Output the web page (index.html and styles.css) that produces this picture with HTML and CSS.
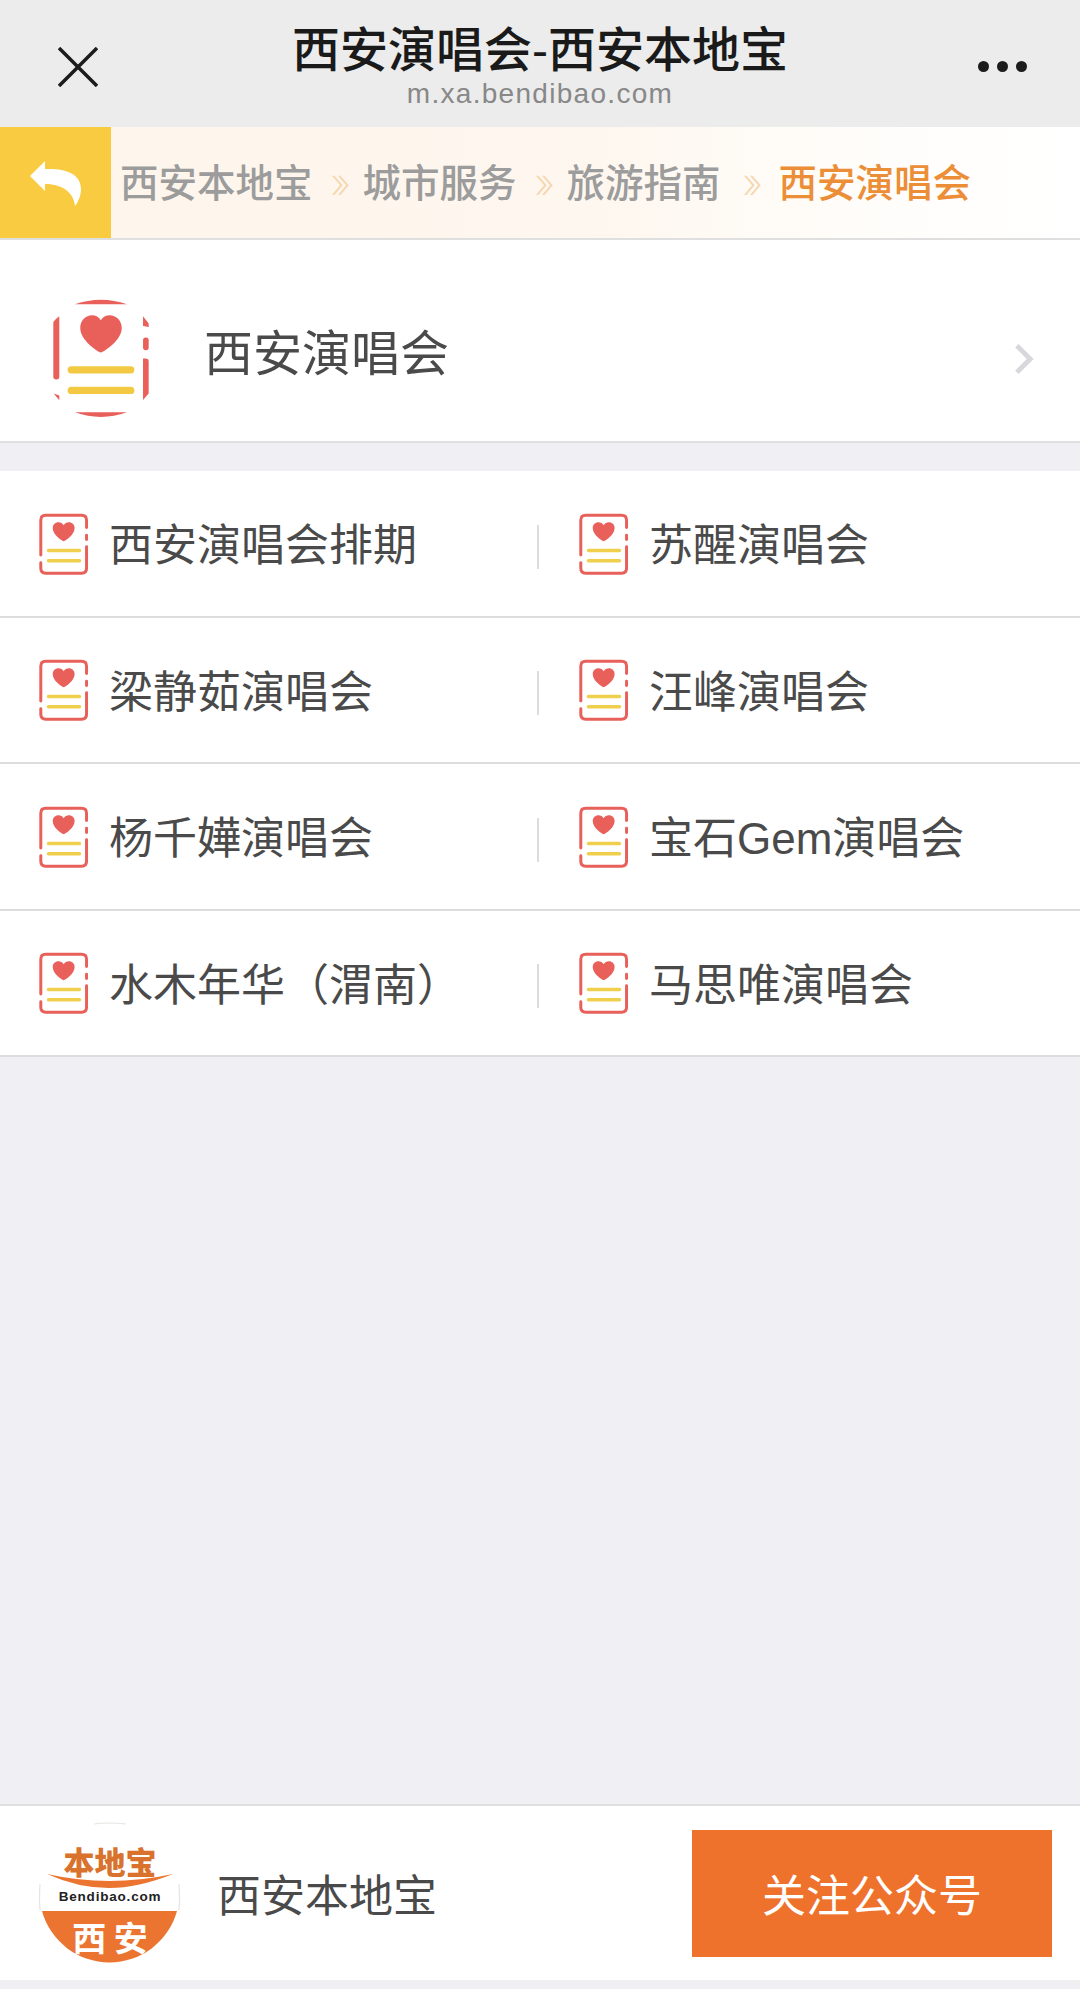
FILE: index.html
```html
<!DOCTYPE html>
<html lang="zh-CN">
<head>
    <meta charset="UTF-8">
    <meta name="viewport" content="width=device-width, initial-scale=1.0">
    <title>西安演唱会-西安本地宝</title>
    <link rel="stylesheet" href="styles.css">
</head>
<body>
    <svg class="sprites" width="0" height="0">
        <symbol id="note-icon" viewBox="54 68 156 190">
            <path class="note-line" d="M62 195V90Q62 75 77 75H185Q200 75 200 90V112M200 135V148M200 170V235Q200 250 185 250H77Q62 250 62 235V218"/>
            <path class="note-heart" d="M131 153C124 150 98 134 98 113C98 103 106 96 115 96C122 96 128 100 131 105C134 100 140 96 147 96C156 96 164 103 164 113C164 134 138 150 131 153Z"/>
            <path class="note-bar" d="M85 181H179M85 212H179"/>
        </symbol>
    </svg>

    <!-- Top bar -->
    <header class="topbar">
        <svg class="topbar-close" viewBox="0 0 40 40"><path d="M1 1L39 39M39 1L1 39"/></svg>
        <div class="topbar-title">
            <h1>西安演唱会-西安本地宝</h1>
            <p>m.xa.bendibao.com</p>
        </div>
        <div class="topbar-more"><span></span><span></span><span></span></div>
    </header>

    <!-- Breadcrumb -->
    <nav class="crumbs">
        <a class="crumbs-back">
            <svg viewBox="0 0 51 45"><path d="M15 0V8C34 7 51 12 51 28C51 35 48 41 45 45C44 33 34 23 15 23V30L0 15Z"/></svg>
        </a>
        <span class="crumb">西安本地宝</span>
        <span class="crumb-sep">»</span>
        <span class="crumb">城市服务</span>
        <span class="crumb-sep">»</span>
        <span class="crumb">旅游指南</span>
        <span class="crumb-sep crumb-sep-wide">»</span>
        <span class="crumb crumb-current">西安演唱会</span>
    </nav>

    <!-- Section heading -->
    <section class="hero">
        <svg class="hero-icon" viewBox="90 50 310 370">
            <path class="hero-red" d="M165 72Q243 44 322 72ZM165 397Q243 425 322 397Z"/>
            <path class="hero-red" d="M100 125Q108 115 118 108V290Q118 298 109 298Q100 298 100 290ZM101 340L118 346V361ZM370 108L387 130V140L370 137ZM370 235Q370 235 378 235Q387 235 387 243V340L370 360Z"/>
            <rect class="hero-red" x="370" y="172" width="17" height="38" rx="8"/>
            <path class="hero-red" d="M243 217C232 213 181 180 181 143C181 120 198 105 216 105C228 105 238 111 243 120C248 111 258 105 270 105C288 105 306 120 306 143C306 180 254 213 243 217Z"/>
            <rect class="hero-yellow" x="143" y="258" width="201" height="22" rx="11"/>
            <rect class="hero-yellow" x="143" y="320" width="201" height="22" rx="11"/>
        </svg>
        <h2>西安演唱会</h2>
        <svg class="hero-arrow" viewBox="0 0 22 36"><path d="M3 3L18 18L3 33"/></svg>
    </section>

    <!-- Links -->
    <ul class="links">
        <li class="link-row">
            <a class="link"><svg class="link-icon"><use href="#note-icon"/></svg>西安演唱会排期</a>
            <i class="link-divider"></i>
            <a class="link"><svg class="link-icon"><use href="#note-icon"/></svg>苏醒演唱会</a>
        </li>
        <li class="link-row">
            <a class="link"><svg class="link-icon"><use href="#note-icon"/></svg>梁静茹演唱会</a>
            <i class="link-divider"></i>
            <a class="link"><svg class="link-icon"><use href="#note-icon"/></svg>汪峰演唱会</a>
        </li>
        <li class="link-row">
            <a class="link"><svg class="link-icon"><use href="#note-icon"/></svg>杨千嬅演唱会</a>
            <i class="link-divider"></i>
            <a class="link"><svg class="link-icon"><use href="#note-icon"/></svg>宝石Gem演唱会</a>
        </li>
        <li class="link-row">
            <a class="link"><svg class="link-icon"><use href="#note-icon"/></svg>水木年华（渭南）</a>
            <i class="link-divider"></i>
            <a class="link"><svg class="link-icon"><use href="#note-icon"/></svg>马思唯演唱会</a>
        </li>
    </ul>

    <div class="filler"></div>

    <!-- Follow bar -->
    <footer class="follow">
        <svg class="follow-logo" viewBox="0 0 143 143">
            <path class="logo-edge" d="M56 2Q71 0 88 2M2 62Q1 75 2 88M141 62Q142 75 141 88"/>
            <path class="logo-orange" d="M4 89H139A70 70 0 0 1 4 89Z"/>
            <path class="logo-orange" d="M9 52Q71 66 135 52Q100 66 71 66Q40 66 9 52Z"/>
            <text class="logo-brand" x="72" y="52">本地宝</text>
            <text class="logo-site" x="72" y="79">Bendibao.com</text>
            <text class="logo-city" x="72" y="129">西 安</text>
        </svg>
        <span class="follow-name">西安本地宝</span>
        <a class="follow-btn">关注公众号</a>
    </footer>
</body>
</html>
```

FILE: styles.css
```css
/* Global Reset */
* {
    margin: 0;
    padding: 0;
    box-sizing: border-box;
}

body {
    display: flex;
    flex-direction: column;
    height: 100vh;
    font-family: "Liberation Sans", "Noto Sans CJK SC", sans-serif;
    background-color: #efeff4;
    color: #4a4a4a;
}

.sprites {
    position: absolute;
}

/* Top bar */
.topbar {
    display: flex;
    align-items: center;
    justify-content: space-between;
    height: 127px;
    padding: 0 53px 0 58px;
    background-color: #ececec;
}

.topbar-close {
    width: 40px;
    height: 40px;
    margin-top: 7px;
    fill: none;
    stroke: #1c1c1c;
    stroke-width: 3.5;
}

.topbar-title {
    position: absolute;
    left: 0;
    right: 0;
    top: 22px;
    text-align: center;
}

.topbar-title h1 {
    font-size: 48px;
    font-weight: 500;
    line-height: 58px;
    color: #1a1a1a;
}

.topbar-title p {
    font-size: 28px;
    line-height: 28px;
    letter-spacing: 1.3px;
    color: #888;
}

.topbar-more {
    display: flex;
    gap: 8px;
    margin-top: 6px;
}

.topbar-more span {
    width: 11px;
    height: 11px;
    border-radius: 50%;
    background-color: #1c1c1c;
}

/* Breadcrumb */
.crumbs {
    display: flex;
    align-items: center;
    height: 113px;
    border-bottom: 2px solid #dfdfdf;
    background: linear-gradient(to right, #fef5eb 0%, #fef7ef 55%, #fffdfa 80%, #fff 100%);
    font-size: 38.5px;
    font-weight: 500;
    line-height: 108px;
    color: #9c9c9c;
}

.crumbs-back {
    display: flex;
    align-items: center;
    justify-content: center;
    align-self: stretch;
    width: 111px;
    margin-right: 9px;
    background-color: #f8cb40;
}

.crumbs-back svg {
    width: 51px;
    height: 45px;
    margin-top: 2px;
    fill: #fff;
}

.crumb {
    padding-top: 2px;
}

.crumb-sep {
    width: 50px;
    padding-left: 6px;
    font-family: Inter, "Liberation Sans", sans-serif;
    font-size: 42px;
    font-weight: 200;
    text-align: center;
    color: #f6d5ad;
}

.crumb-sep-wide {
    width: 58px;
}

.crumb-current {
    color: #ec8e38;
}

/* Section heading */
.hero {
    display: flex;
    align-items: center;
    height: 203px;
    margin-bottom: 28px;
    padding: 36px 46px 0 50px;
    border-bottom: 2px solid #dfdfdf;
    background-color: #fff;
}

.hero-icon {
    width: 103px;
    height: 123px;
}

.hero-red {
    fill: #e9605a;
}

.hero-yellow {
    fill: #f3c944;
}

.hero h2 {
    flex: 1;
    margin-left: 51px;
    margin-bottom: 18px;
    font-size: 49px;
    font-weight: 400;
}

.hero-arrow {
    width: 20px;
    height: 32px;
    fill: none;
    stroke: #d8d8dc;
    stroke-width: 5.5;
}

/* Links */
.links {
    list-style: none;
    background-color: #fff;
}

.link-row {
    display: grid;
    grid-template-columns: 537px 2px 1fr;
    align-items: center;
    height: 146.5px;
    border-bottom: 2px solid #dcdcdc;
}

.link {
    display: flex;
    align-items: center;
    gap: 19px;
    padding-left: 38px;
    padding-top: 6px;
    font-size: 44px;
    line-height: 60px;
}

.link-divider {
    height: 44px;
    margin-top: 7px;
    background-color: #dcdcdc;
}

.link-divider + .link {
    padding-left: 39px;
}

.link-icon {
    width: 52px;
    height: 63px;
    margin-top: -4px;
    flex-shrink: 0;
}

.note-line {
    fill: none;
    stroke: #e8605a;
    stroke-width: 9;
    stroke-linecap: round;
}

.note-heart {
    fill: #e9605a;
}

.note-bar {
    fill: none;
    stroke: #f0cf4c;
    stroke-width: 10;
    stroke-linecap: round;
}

.filler {
    flex: 1;
}

/* Follow bar */
.follow {
    display: flex;
    align-items: center;
    height: 178px;
    margin-bottom: 7px;
    padding: 0 28px 0 38px;
    border-top: 2px solid #dfdfdf;
    border-bottom: 2px solid #efefef;
    background-color: #fff;
}

.follow-logo {
    width: 143px;
    height: 143px;
}

.logo-edge {
    fill: none;
    stroke: #e4e4e0;
    stroke-width: 1.2;
}

.logo-orange {
    fill: #ea7430;
}

.logo-brand {
    font-family: "Noto Sans CJK SC", sans-serif;
    font-size: 31px;
    font-weight: 900;
    text-anchor: middle;
    fill: #d9722c;
}

.logo-site {
    font-size: 13.5px;
    font-weight: 700;
    letter-spacing: 0.8px;
    text-anchor: middle;
    fill: #222;
}

.logo-city {
    font-family: "Noto Sans CJK SC", sans-serif;
    font-size: 34px;
    font-weight: 700;
    text-anchor: middle;
    fill: #fff;
}

.follow-name {
    flex: 1;
    margin-left: 36px;
    font-size: 44px;
}

.follow-btn {
    display: flex;
    align-items: center;
    justify-content: center;
    width: 360px;
    height: 127px;
    font-size: 44px;
    color: #fff;
    background-color: #ee722c;
}
```
